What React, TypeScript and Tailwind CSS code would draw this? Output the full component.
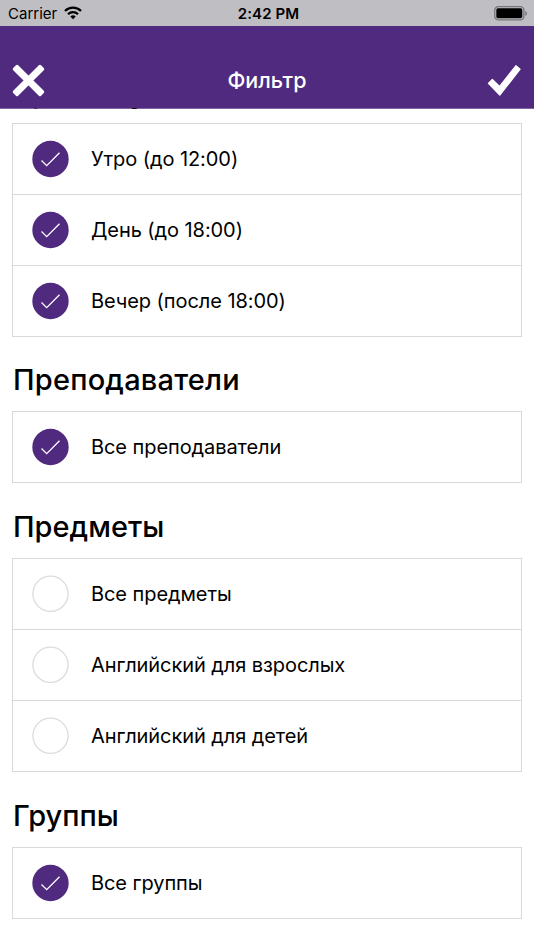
import React from "react";

function Mark({ on }: { on: boolean }) {
  return (
    <svg className="ml-[19px] h-[37px] w-[37px] shrink-0 overflow-visible" viewBox="0 0 37 37" fill="none">
      {on ? (
        <>
          <circle cx="18.5" cy="18" r="18.2" fill="#4f2a7f" />
          <path d="M9.5 19.5 14.7 24.7 27.5 11.7" stroke="#fff" strokeWidth="1.3" />
        </>
      ) : (
        <circle cx="18.5" cy="17.8" r="17.6" stroke="#dcdcdc" strokeWidth="1.3" />
      )}
    </svg>
  );
}

function Group({ items, on }: { items: string[]; on: boolean }) {
  return (
    <div className="mx-3 border border-b-0 border-[#d9d9d9]">
      {items.map((label) => (
        <div key={label} className="flex h-[71px] items-center border-b border-[#d9d9d9]">
          <Mark on={on} />
          <span className="ml-[22px] text-[20px] leading-7 tracking-[-0.07px] whitespace-nowrap">{label}</span>
        </div>
      ))}
    </div>
  );
}

function Title({ children, className = "mt-[23px]" }: { children: string; className?: string }) {
  return (
    <h2 className={`${className} mb-[11px] ml-[13px] h-[41px] text-[29px] leading-[41px] font-medium whitespace-nowrap`}>
      {children}
    </h2>
  );
}

export default function App() {
  return (
    <div className="h-[950px] w-[534px] overflow-hidden bg-white font-['Inter',sans-serif] text-black">
      <div className="relative z-10">
        <div className="grid h-[26px] grid-cols-3 items-center bg-[#bfbec3] pr-[6px] pl-2 text-[15px]">
          <div className="flex items-center gap-[7px]">
            <span className="pt-[3px]">Carrier</span>
            <svg className="h-[14px] w-[18px]" viewBox="0 0 18 14" fill="none" stroke="#000" strokeWidth="2.3">
              <path d="M1 5A11.3 11.3 0 0 1 17 5" />
              <path d="M4 8.2A7.1 7.1 0 0 1 14 8.2" />
              <path d="M9 13.3 6.3 10.6A3.8 3.8 0 0 1 11.7 10.6Z" fill="#000" stroke="none" />
            </svg>
          </div>
          <span className="pt-[3px] pl-px text-center font-semibold tracking-[0.1px]">2:42 PM</span>
          <svg className="h-4 w-[34px] justify-self-end" viewBox="0 0 34 16">
            <rect x="0.7" y="1.7" width="29.2" height="13.1" rx="3.6" fill="none" stroke="#777679" strokeWidth="1.3" />
            <rect x="2.3" y="3.3" width="26" height="9.9" rx="1.6" />
            <path d="M31.3 6c2.2.7 2.2 4.2 0 4.9Z" fill="#777679" />
          </svg>
        </div>
        <div className="grid h-[82px] grid-cols-[1fr_auto_1fr] items-end bg-[#4f2a7f] px-3 pb-[11px]">
          <svg className="h-[33px] w-[33px]" viewBox="0 0 33 33" fill="#fff">
            <rect x="-3.2" y="13" width="39.4" height="7" rx="1.6" transform="rotate(45 16.5 16.5)" />
            <rect x="-3.2" y="13" width="39.4" height="7" rx="1.6" transform="rotate(-45 16.5 16.5)" />
          </svg>
          <span className="pb-px text-[21.5px] leading-8 font-medium text-white">Фильтр</span>
          <svg className="h-[33px] w-[35px] justify-self-end" viewBox="0 0 35 33" fill="#fff" stroke="#fff" strokeWidth="1.2" strokeLinejoin="round">
            <path d="M1.4 19.3 5.3 15.4 12.6 22.4 29 1.7 33.1 5.2 12.8 31.2Z" />
          </svg>
        </div>
      </div>
      <div className="h-px bg-[#8065a2]" />
      <Title className="relative top-px -mt-[38px]">Время суток</Title>
      <Group on items={["Утро (до 12:00)", "День (до 18:00)", "Вечер (после 18:00)"]} />
      <Title className="mt-[22px] tracking-[0.2px]">Преподаватели</Title>
      <Group on items={["Все преподаватели"]} />
      <Title>Предметы</Title>
      <Group on={false} items={["Все предметы", "Английский для взрослых", "Английский для детей"]} />
      <Title>Группы</Title>
      <Group on items={["Все группы"]} />
    </div>
  );
}
